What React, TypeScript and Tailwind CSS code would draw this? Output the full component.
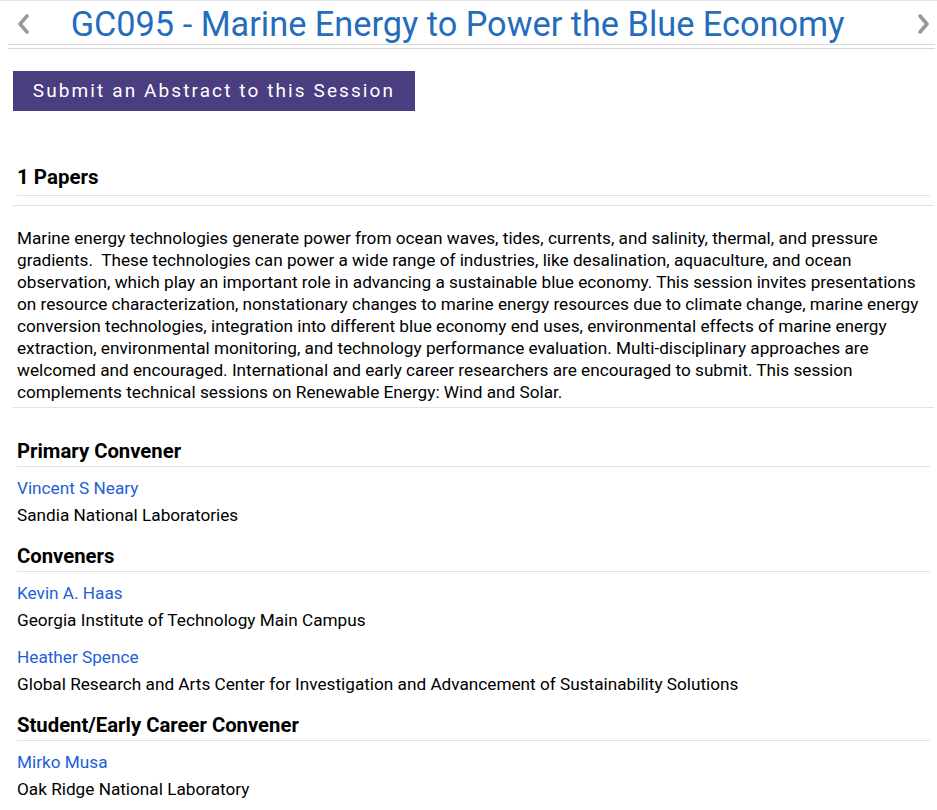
const conveners = [
  {
    heading: "Primary Convener",
    people: [{ name: "Vincent S Neary", org: "Sandia National Laboratories" }],
  },
  {
    heading: "Conveners",
    people: [
      { name: "Kevin A. Haas", org: "Georgia Institute of Technology Main Campus" },
      {
        name: "Heather Spence",
        org: "Global Research and Arts Center for Investigation and Advancement of Sustainability Solutions",
      },
    ],
  },
  {
    heading: "Student/Early Career Convener",
    people: [{ name: "Mirko Musa", org: "Oak Ridge National Laboratory" }],
  },
];

function Chevron({ dir }: { dir: "left" | "right" }) {
  const pts = dir === "left" ? "10,2 3,10 10,18" : "3,2 10,10 3,18";
  return (
    <svg width="13" height="20" viewBox="0 0 13 20" className="shrink-0">
      <polyline points={pts} fill="none" stroke="#9a9a9a" strokeWidth="3.6" strokeLinecap="round" strokeLinejoin="round" />
    </svg>
  );
}

export default function App() {
  return (
    <div className="min-h-screen bg-white text-black" style={{ fontFamily: "Roboto, 'Liberation Sans', sans-serif" }}>
      <div className="border-t border-[#e6e6ea] pt-[2px] w-[937px]">
        {/* title bar with prev / next arrows */}
        <div className="ml-[8px] mr-[2px]">
          <div className="flex items-center justify-between h-[42px] border-b border-[#d8d8dc]">
            <div className="ml-[9px] mt-[1px]">
              <Chevron dir="left" />
            </div>
            <h1 className="flex-1 text-center text-[34.3px] leading-[40px] text-[#236dbc] pr-[32px]">
              GC095 - Marine Energy to Power the Blue Economy
            </h1>
            <div className="mr-[5px] mt-[1px]">
              <Chevron dir="right" />
            </div>
          </div>
          <div className="mt-[3px] border-b border-[#d8d8dc]" />
        </div>

        <div className="pl-[13px] pr-[3px]">
          <button className="mt-[22px] h-[40px] w-[402px] bg-[#4a3d80] text-white text-[19px] tracking-[2.1px]">
            Submit an Abstract to this Session
          </button>

          <div className="mt-[48px] border-b border-[#e2e2e2]">
            <h2 className="mx-[4px] text-[20.5px] leading-[36px] font-bold border-b border-[#e2e2e2]">1 Papers</h2>
            <div className="h-[9px]" />
          </div>

          <div className="border-b border-[#e2e2e2] pt-[21px] pb-[4px] px-[4px]">
            <p className="text-[17.2px] leading-[22px]">
              Marine energy technologies generate power from ocean waves, tides, currents, and salinity, thermal, and pressure
              gradients.&nbsp; These technologies can power a wide range of industries, like desalination, aquaculture, and ocean
              observation, which play an important role in advancing a sustainable blue economy. This session invites presentations
              on resource characterization, nonstationary changes to marine energy resources due to climate change, marine energy
              conversion technologies, integration into different blue economy end uses, environmental effects of marine energy
              extraction, environmental monitoring, and technology performance evaluation. Multi-disciplinary approaches are
              welcomed and encouraged. International and early career researchers are encouraged to submit. This session
              complements technical sessions on Renewable Energy: Wind and Solar.
            </p>
          </div>

          <div className="px-[4px] pt-[28px]">
            {conveners.map((group) => (
              <section key={group.heading} className="mb-[12px]">
                <h3 className="text-[20.3px] leading-[30px] font-bold border-b border-[#e2e2e2]">{group.heading}</h3>
                <div className="pt-[8px]">
                  {group.people.map((p) => (
                    <div key={p.name} className="mb-[11px] last:mb-0">
                      <a className="block text-[17.2px] leading-[27px] text-[#1d5fd6]">{p.name}</a>
                      <div className="text-[17.2px] leading-[26.5px]">{p.org}</div>
                    </div>
                  ))}
                </div>
              </section>
            ))}
          </div>
        </div>
      </div>
    </div>
  );
}
